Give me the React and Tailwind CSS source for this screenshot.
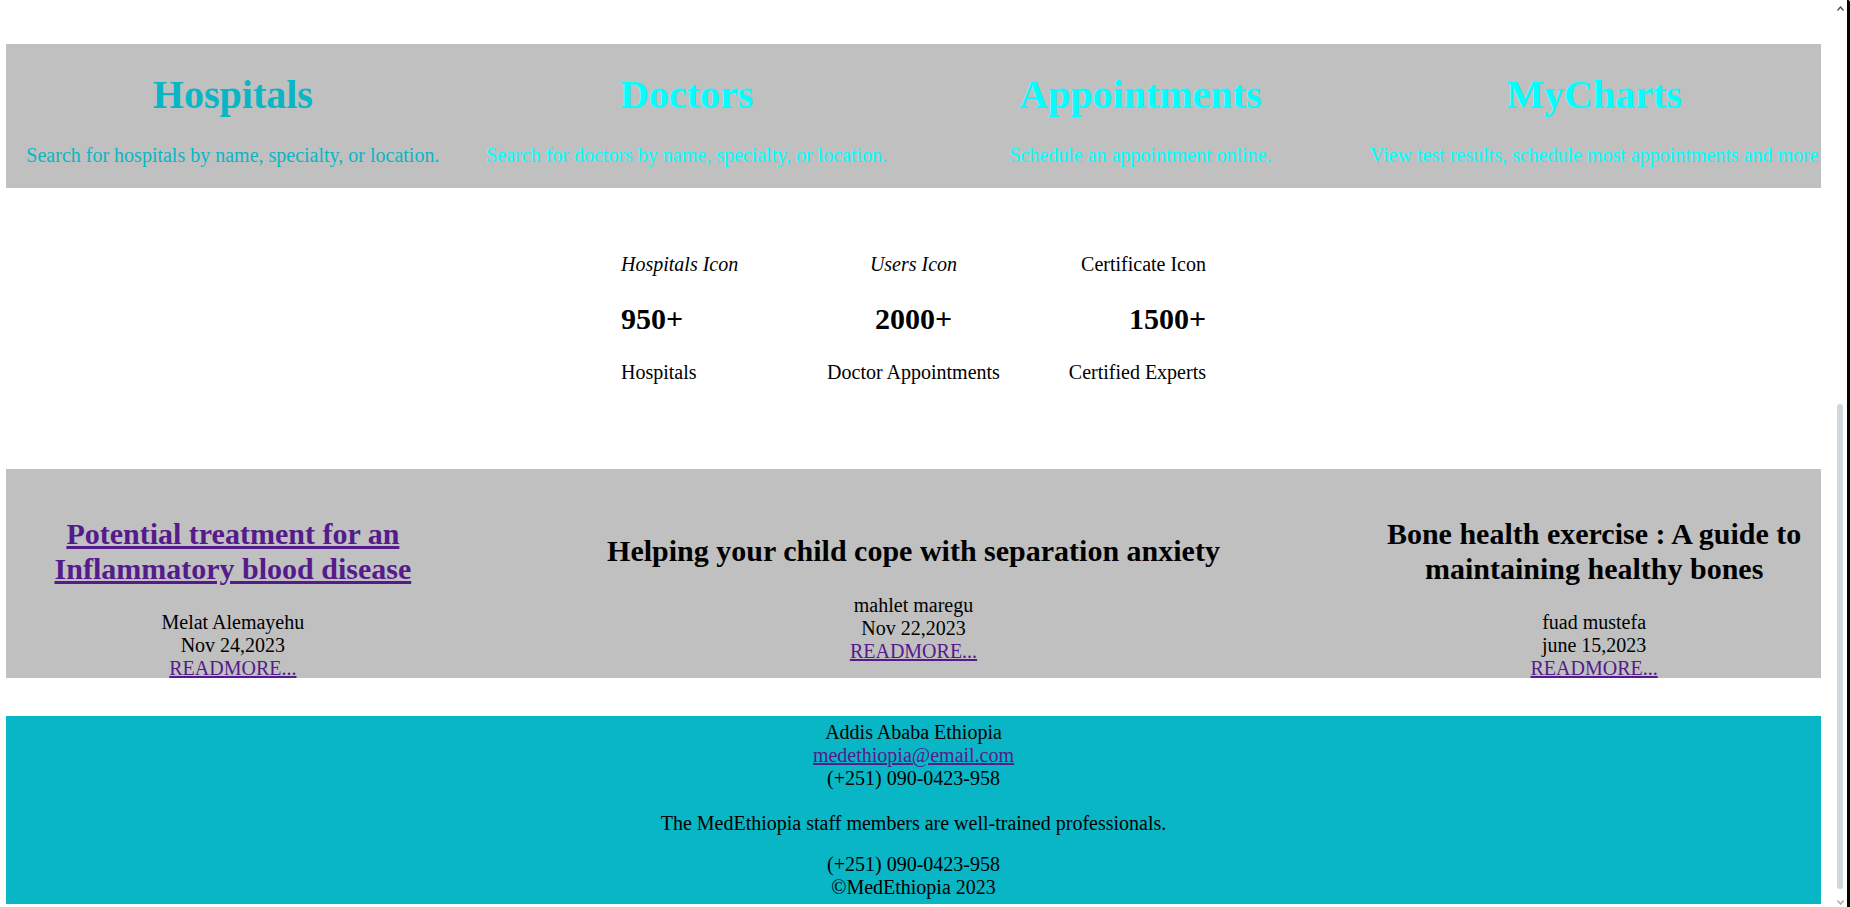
import React from "react";

const services = [
  { title: "Hospitals", text: "Search for hospitals by name, specialty, or location.", active: true },
  { title: "Doctors", text: "Search for doctors by name, specialty, or location." },
  { title: "Appointments", text: "Schedule an appointment online." },
  { title: "MyCharts", text: "View test results, schedule most appointments and more" },
];

function Scrollbar() {
  return (
    <div className="w-[17px] h-[907px] flex">
      <div className="w-[14px] flex flex-col items-center pt-[6px]">
        <svg width="7" height="5" viewBox="0 0 7 5" className="block">
          <polyline points="0.5,4.5 3.5,1 6.5,4.5" fill="none" stroke="#505050" strokeWidth="1.4" />
        </svg>
        <div className="mt-[393px] w-[6px] h-[485px] rounded-full bg-[#cfd7df]" />
        <svg width="7" height="5" viewBox="0 0 7 5" className="block mt-[11px]">
          <polyline points="0.5,0.5 3.5,4 6.5,0.5" fill="none" stroke="#a8a8a8" strokeWidth="1.4" />
        </svg>
      </div>
      <div className="w-[3px] h-full border-r-[3px] border-t-[3px] border-black rounded-tr-[12px]" />
    </div>
  );
}

export default function App() {
  return (
    <div className="w-[1850px] h-[907px] overflow-hidden flex bg-white text-black font-['Liberation_Serif','Times_New_Roman',serif] text-[20px] leading-[23px]">
      <div className="w-[1833px] pl-[6px] pr-[12px] pt-[44px]">
        {/* Services band */}
        <section className="h-[144px] bg-[#c0c0c0] grid grid-cols-4">
          {services.map((s) => (
            <div
              key={s.title}
              className={
                "flex flex-col items-center text-center " +
                (s.active ? "text-[#09b6c5]" : "text-[#00ffff]")
              }
            >
              <h1 className="mt-[28px] text-[40px] font-bold leading-[46px] whitespace-nowrap">{s.title}</h1>
              <p className="mt-[26px] leading-[23px] whitespace-nowrap">{s.text}</p>
            </div>
          ))}
        </section>

        {/* Stats */}
        <section className="h-[281px] pt-[65px]">
          <div className="w-[585px] mx-auto grid grid-cols-3">
            <div className="flex flex-col items-start text-left">
              <p className="italic leading-[23px]">Hospitals Icon</p>
              <h2 className="mt-[26px] text-[30px] font-bold leading-[34.5px]">950+</h2>
              <p className="mt-[24.5px] leading-[23px]">Hospitals</p>
            </div>
            <div className="flex flex-col items-center text-center">
              <p className="italic leading-[23px]">Users Icon</p>
              <h2 className="mt-[26px] text-[30px] font-bold leading-[34.5px]">2000+</h2>
              <p className="mt-[24.5px] leading-[23px] whitespace-nowrap">Doctor Appointments</p>
            </div>
            <div className="flex flex-col items-end text-right">
              <p className="leading-[23px]">Certificate Icon</p>
              <h2 className="mt-[26px] text-[30px] font-bold leading-[34.5px]">1500+</h2>
              <p className="mt-[24.5px] leading-[23px] whitespace-nowrap">Certified Experts</p>
            </div>
          </div>
        </section>

        {/* Blog band */}
        <section className="h-[209px] pt-[25px] bg-[#c0c0c0] flex">
          <div className="w-[453.75px] flex flex-col justify-center text-center">
            <h2 className="my-[25px] text-[30px] font-bold leading-[34.5px]">
              <a href="#" className="text-[#551a8b] underline">
                Potential treatment for an Inflammatory blood disease
              </a>
            </h2>
            <p>Melat Alemayehu</p>
            <p>Nov 24,2023</p>
            <p>
              <a href="#" className="text-[#551a8b] underline">READMORE...</a>
            </p>
          </div>
          <div className="w-[907.5px] flex flex-col justify-center text-center">
            <h2 className="my-[25px] text-[30px] font-bold leading-[34.5px]">
              Helping your child cope with separation anxiety
            </h2>
            <p>mahlet maregu</p>
            <p>Nov 22,2023</p>
            <p>
              <a href="#" className="text-[#551a8b] underline">READMORE...</a>
            </p>
          </div>
          <div className="w-[453.75px] flex flex-col justify-center text-center">
            <h2 className="my-[25px] text-[30px] font-bold leading-[34.5px]">
              Bone health exercise : A guide to maintaining healthy bones
            </h2>
            <p>fuad mustefa</p>
            <p>june 15,2023</p>
            <p>
              <a href="#" className="text-[#551a8b] underline">READMORE...</a>
            </p>
          </div>
        </section>

        {/* Footer */}
        <footer className="mt-[38px] h-[188px] bg-[#09b6c5] text-center pt-[5px]">
          <p>
            Addis Ababa Ethiopia
            <br />
            <a href="#" className="text-[#551a8b] underline">medethiopia@email.com</a>
            <br />
            (+251) 090-0423-958
          </p>
          <p className="mt-[22px]">The MedEthiopia staff members are well-trained professionals.</p>
          <p className="mt-[18px]">
            (+251) 090-0423-958
            <br />
            ©MedEthiopia 2023
          </p>
        </footer>
      </div>
      <Scrollbar />
    </div>
  );
}
